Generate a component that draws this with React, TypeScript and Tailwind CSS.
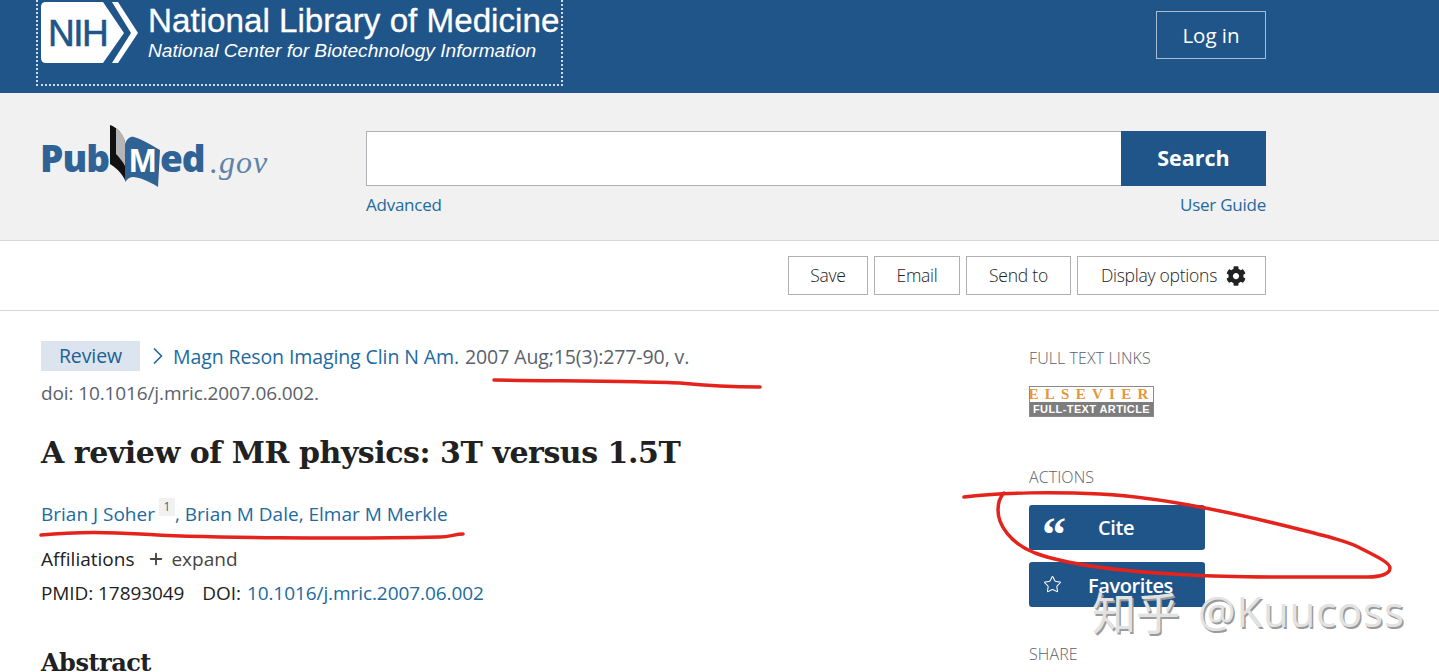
import { ChevronRight, Plus, Star } from "lucide-react";
import { FaCog } from "react-icons/fa";

function NihLogo() {
    return (
        <svg width="98" height="62" viewBox="0 0 98 62" className="shrink-0">
            <path d="M5 0H62L83 31L62 61H5Q0 61 0 56V5Q0 0 5 0Z" fill="#fff" />
            <path d="M71 0H77L97 31L77 61H71L90 31Z" fill="#fff" />
            <text x="7" y="44" fontFamily="Liberation Sans" fontSize="37" letterSpacing="-1.5" stroke="#20558a" strokeWidth="0.6" fill="#20558a">
                NIH
            </text>
        </svg>
    );
}

function PubMedLogo() {
    return (
        <svg width="230" height="66" viewBox="0 0 230 66" className="block">
            <text x="-1" y="50" fontFamily="Open Sans" fontWeight="800" fontSize="37" letterSpacing="-1" fill="#2f6295">
                Pub
            </text>
            <path d="M69 3C76 5 82 12 84 20V58C80 50 75 46 69 42Z" fill="#111" />
            <path d="M75 6C79 9 83 14 84 20V44C82 40 78 35 75 32Z" fill="#b5b5b5" />
            <path d="M84 60V22C86 16 90 14 93 15C103 18 112 24 119 28L117 65C108 59 97 55 92 55C88 55 86 58 84 60Z" fill="#2f6295" />
            <text x="88" y="50" fontFamily="Liberation Sans" fontWeight="700" fontSize="33" fill="#fff">
                M
            </text>
            <text x="119" y="50" fontFamily="Open Sans" fontWeight="800" fontSize="37" letterSpacing="-1" fill="#2f6295">
                ed
            </text>
            <text x="169" y="51" fontFamily="Liberation Serif" fontStyle="italic" fontSize="32" letterSpacing="1" fill="#5f83a8">
                .gov
            </text>
        </svg>
    );
}

function ToolButton({ label, width, children }: { label: string; width: string; children?: React.ReactNode }) {
    return (
        <button className={`${width} h-[39px] border border-[#aeb0b5] bg-white flex items-center justify-center gap-[9px] text-[17.5px] font-light text-[#212121]`}>
            {label}
            {children}
        </button>
    );
}

function SectionLabel({ label }: { label: string }) {
    return <p className="text-[16px] leading-5 tracking-[0.1px] font-light text-[#5b616b]">{label}</p>;
}

function ElsevierBadge() {
    return (
        <div className="w-[125px] h-[31px] border border-[#8a8a8a] flex flex-col">
            <div className="h-[15px] bg-white flex items-center justify-center text-[15px] leading-none font-bold tracking-[6.3px] text-[#e8963a] font-['Liberation_Serif',serif]">
                ELSEVIER
            </div>
            <div className="flex-1 bg-[#7d7d7d] flex items-center justify-center text-[11px] leading-none font-bold tracking-[0.4px] text-white font-['Liberation_Sans',sans-serif]">
                FULL-TEXT ARTICLE
            </div>
        </div>
    );
}

export default function App() {
    return (
        <div className="relative w-[1439px] h-[672px] overflow-hidden bg-white font-['Open_Sans',sans-serif]">
            <header className="h-[93px] bg-[#20558a]">
                <div className="ml-[41px] w-[1225px] flex justify-between">
                    <div className="relative flex gap-[9px] pt-[2px] text-white font-['Liberation_Sans',sans-serif]">
                        <span className="absolute -left-[5px] -top-[4px] w-[527px] h-[90px] border-2 border-dotted border-white/80"></span>
                        <NihLogo />
                        <div>
                            <p className="text-[33.2px] leading-[38px] whitespace-nowrap [-webkit-text-stroke:0.3px_#fff]">National Library of Medicine</p>
                            <p className="text-[19.2px] leading-[22px] italic whitespace-nowrap">National Center for Biotechnology Information</p>
                        </div>
                    </div>
                    <button className="mt-[11px] w-[110px] h-[48px] border border-[#a9bdd2] text-white text-[20.5px]">Log in</button>
                </div>
            </header>

            <section className="h-[148px] bg-[#f1f1f1] border-b border-[#d6d7d9]">
                <div className="ml-[41px] w-[1225px] flex">
                    <div className="w-[325px] pt-[29px]">
                        <PubMedLogo />
                    </div>
                    <div className="flex-1 pt-[38px]">
                        <div className="flex h-[55px]">
                            <input className="flex-1 bg-white border border-[#aeb0b5] border-r-0" />
                            <button className="w-[145px] bg-[#20558a] text-white text-[21.5px] font-bold">Search</button>
                        </div>
                        <div className="mt-[7px] flex justify-between text-[17px] leading-6 tracking-[-0.25px] text-[#216a9f]">
                            <span>Advanced</span>
                            <span>User Guide</span>
                        </div>
                    </div>
                </div>
            </section>

            <nav className="h-[70px] border-b border-[#d6d7d9] bg-white">
                <div className="ml-[41px] w-[1225px] pt-[15px] flex justify-end gap-[6px] tracking-[-0.25px]">
                    <ToolButton label="Save" width="w-[80px]" />
                    <ToolButton label="Email" width="w-[86px]" />
                    <ToolButton label="Send to" width="w-[105px]" />
                    <ToolButton label="Display options" width="w-[189px] pl-[4px]">
                        <FaCog className="text-[20px] text-[#212121]" />
                    </ToolButton>
                </div>
            </nav>

            <div className="ml-[41px] w-[1225px] flex">
                <main className="w-[988px] pt-[30px]">
                    <div className="flex items-center h-[30px] text-[19.5px] tracking-[-0.1px]">
                        <span className="w-[99px] h-[30px] bg-[#dce4ef] text-[#205f93] flex items-center justify-center">Review</span>
                        <ChevronRight className="ml-[4px] mr-[1px] w-[28px] h-[28px] text-[#216a9f]" strokeWidth={1.5} />
                        <span className="pt-[2px] text-[#216a9f] whitespace-nowrap">Magn Reson Imaging Clin N Am.</span>
                        <span className="pt-[2px] ml-[6px] text-[#5b616b] whitespace-nowrap">2007 Aug;15(3):277-90, v.</span>
                    </div>
                    <p className="mt-[10px] text-[19px] leading-6 tracking-[-0.12px] text-[#5b616b]">doi: 10.1016/j.mric.2007.06.002.</p>
                    <h1 className="mt-[26px] text-[30px] leading-[44px] font-bold text-[#212121] tracking-[-0.45px] font-['DejaVu_Serif',serif] whitespace-nowrap">
                        A review of MR physics: 3T versus 1.5T
                    </h1>
                    <div className="mt-[24px] flex items-start h-[30px] text-[19px] leading-[30px] text-[#216a9f]">
                        <span>Brian J Soher</span>
                        <span className="ml-[4px] w-[16px] h-[18px] mt-[-1px] bg-[#f1f1f1] text-[#5b616b] text-[12px] leading-[18px] text-center">1</span>
                        <span>, Brian M Dale, Elmar M Merkle</span>
                    </div>
                    <div className="mt-[17px] flex items-center h-[26px] text-[19px] text-[#212121]">
                        <span>Affiliations</span>
                        <Plus className="ml-[13px] mr-[6px] w-[18px] h-[18px] text-[#494440]" strokeWidth={2.5} />
                        <span className="text-[#494440]">expand</span>
                    </div>
                    <div className="mt-[8px] flex h-[26px] items-center text-[19px] tracking-[-0.08px] text-[#212121]">
                        <span>PMID: 17893049</span>
                        <span className="ml-[18px]">DOI:</span>
                        <span className="ml-[6px] text-[#216a9f]">10.1016/j.mric.2007.06.002</span>
                    </div>
                    <h2 className="mt-[41px] text-[24px] leading-8 font-bold text-[#212121] tracking-[-0.5px] font-['DejaVu_Serif',serif]">Abstract</h2>
                </main>

                <aside className="flex-1 pt-[37px]">
                    <SectionLabel label="FULL TEXT LINKS" />
                    <div className="mt-[18px]">
                        <ElsevierBadge />
                    </div>
                    <div className="mt-[50px]">
                        <SectionLabel label="ACTIONS" />
                    </div>
                    <button className="mt-[18px] w-[176px] h-[45px] rounded-[3px] bg-[#20558a] text-white flex items-center">
                        <span className="w-[69px] pl-[13px] text-left text-[48px] leading-[45px] pt-[14px] font-bold font-['Liberation_Serif',serif]">“</span>
                        <span className="text-[20px] font-semibold tracking-[-0.4px]">Cite</span>
                    </button>
                    <button className="mt-[12px] w-[176px] h-[45px] rounded-[3px] bg-[#20558a] text-white flex items-center">
                        <span className="w-[59px] pl-[14px]">
                            <Star className="w-[19px] h-[19px]" strokeWidth={1.3} />
                        </span>
                        <span className="pt-[2px] text-[20px] font-semibold tracking-[-0.4px]">Favorites</span>
                    </button>
                    <div className="mt-[37px]">
                        <SectionLabel label="SHARE" />
                    </div>
                </aside>
            </div>

            <svg width="1439" height="672" className="absolute left-0 top-0 pointer-events-none" fill="none" stroke="#e4231c" strokeLinecap="round">
                <path d="M494 380C560 381 640 381 680 383C710 386 735 387 760 387" strokeWidth="3.5" />
                <path d="M41 535C70 532 110 532 140 534C200 538 350 539 440 537C450 537 455 534 463 534" strokeWidth="3.5" />
                <path
                    d="M964 497C1000 492 1060 492 1100 494C1160 497 1230 512 1290 527C1330 537 1350 542 1362 549C1378 557 1390 563 1390 568C1390 574 1380 577 1368 577C1320 577 1240 578 1190 575C1130 572 1070 566 1035 553C1010 543 998 525 998 510C998 502 1000 497 1004 493"
                    strokeWidth="3.5"
                />
            </svg>

            <div className="absolute left-[1092px] top-[581px] flex items-center gap-[18px] text-[#e2e2e2] [text-shadow:1.5px_1.5px_0_#9a9a9a] whitespace-nowrap pointer-events-none">
                <span className="text-[44px] leading-[60px] font-['Noto_Sans_CJK_SC',sans-serif]">知乎</span>
                <span className="text-[42px] leading-[60px] tracking-[0.8px] font-['Open_Sans',sans-serif]">@Kuucoss</span>
            </div>
        </div>
    );
}
